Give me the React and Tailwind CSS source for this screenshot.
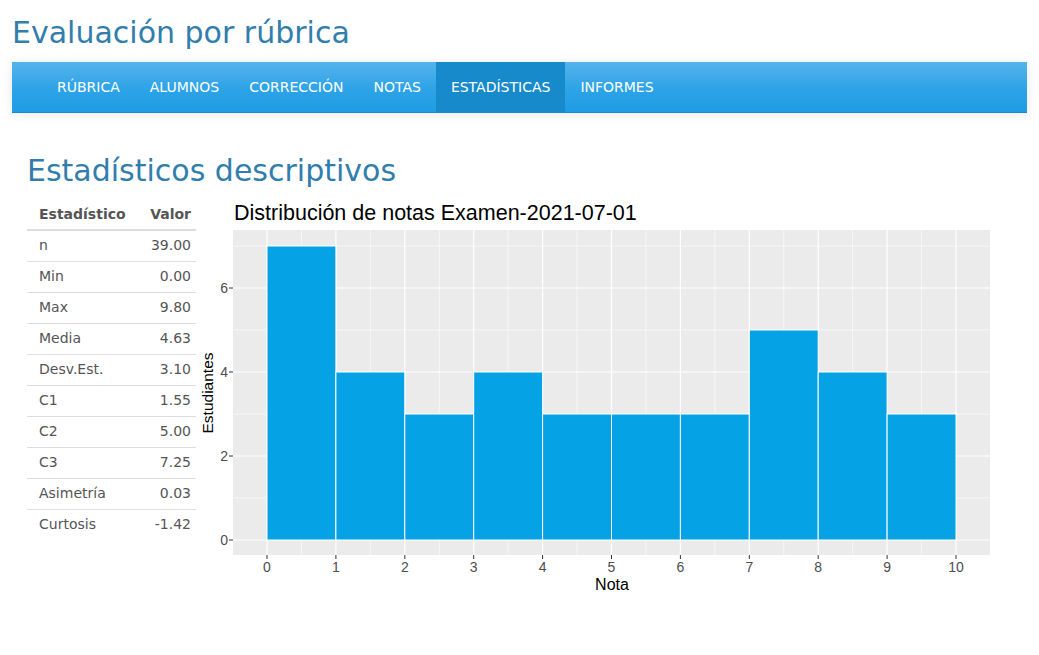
import React from "react"

const navItems = ["RÚBRICA", "ALUMNOS", "CORRECCIÓN", "NOTAS", "ESTADÍSTICAS", "INFORMES"]

const stats = [
  ["n", "39.00"],
  ["Min", "0.00"],
  ["Max", "9.80"],
  ["Media", "4.63"],
  ["Desv.Est.", "3.10"],
  ["C1", "1.55"],
  ["C2", "5.00"],
  ["C3", "7.25"],
  ["Asimetría", "0.03"],
  ["Curtosis", "-1.42"],
]

const counts = [7, 4, 3, 4, 3, 3, 3, 5, 4, 3]

// panel geometry in page coords (viewBox matches page offset)
const X0 = 267
const XU = 68.9
const Y0 = 540
const YU = 42
const PL = 233
const PR = 990
const PT = 230
const PB = 555
const px = (v) => X0 + v * XU
const py = (v) => Y0 - v * YU

const Histogram = () => {
  const minorX = [-0.5, 0.5, 1.5, 2.5, 3.5, 4.5, 5.5, 6.5, 7.5, 8.5, 9.5, 10.5]
  const majorX = [0, 1, 2, 3, 4, 5, 6, 7, 8, 9, 10]
  const minorY = [1, 3, 5, 7]
  const majorY = [0, 2, 4, 6]
  return (
    <svg width="810" height="410" viewBox="196 196 810 410" className="block shrink-0">
      <text x="234" y="220" fontSize="21.5" fill="#000" fontFamily="'Liberation Sans', Arial, sans-serif">
        Distribución de notas Examen-2021-07-01
      </text>
      <rect x={PL} y={PT} width={PR - PL} height={PB - PT} fill="#ebebeb" />
      {minorX.map((v) => (
        <line key={"mx" + v} x1={px(v)} x2={px(v)} y1={PT} y2={PB} stroke="#fff" strokeWidth="0.6" />
      ))}
      {minorY.map((v) => (
        <line key={"my" + v} x1={PL} x2={PR} y1={py(v)} y2={py(v)} stroke="#fff" strokeWidth="0.6" />
      ))}
      {majorX.map((v) => (
        <line key={"Mx" + v} x1={px(v)} x2={px(v)} y1={PT} y2={PB} stroke="#fff" strokeWidth="1.2" />
      ))}
      {majorY.map((v) => (
        <line key={"My" + v} x1={PL} x2={PR} y1={py(v)} y2={py(v)} stroke="#fff" strokeWidth="1.2" />
      ))}
      {counts.map((c, i) => (
        <rect
          key={i}
          x={px(i)}
          y={py(c)}
          width={XU}
          height={c * YU}
          fill="#05a2e6"
          stroke="#fff"
          strokeWidth="1"
        />
      ))}
      {majorY.map((v) => (
        <g key={"ty" + v}>
          <line x1={229} x2={233} y1={py(v)} y2={py(v)} stroke="#333" strokeWidth="1" />
          <text x="228" y={py(v) + 5} fontSize="14" fill="#4d4d4d" textAnchor="end" fontFamily="'Liberation Sans', Arial, sans-serif">
            {v}
          </text>
        </g>
      ))}
      {majorX.map((v) => (
        <g key={"tx" + v}>
          <line x1={px(v)} x2={px(v)} y1={PB} y2={PB + 4} stroke="#333" strokeWidth="1" />
          <text x={px(v)} y="571.5" fontSize="14" fill="#4d4d4d" textAnchor="middle" fontFamily="'Liberation Sans', Arial, sans-serif">
            {v}
          </text>
        </g>
      ))}
      <text x="612" y="590" fontSize="16" fill="#000" textAnchor="middle" fontFamily="'Liberation Sans', Arial, sans-serif">
        Nota
      </text>
      <text
        x="0"
        y="0"
        fontSize="15.5"
        fill="#000"
        textAnchor="middle"
        transform="translate(213 393) rotate(-90)"
        fontFamily="'Liberation Sans', Arial, sans-serif"
      >
        Estudiantes
      </text>
    </svg>
  )
}

const App = () => {
  return (
    <div className="min-h-[655px] bg-white px-[12px] text-[#555555] [font-family:'DejaVu_Sans',sans-serif]">
      <h2 className="pt-[16px] text-[30px] leading-[33px] text-[#317eac]">Evaluación por rúbrica</h2>

      <nav className="mt-[13px] flex h-[51px] items-stretch border-b border-[#178acc] bg-gradient-to-b from-[#54b4eb] via-[#2fa4e7] to-[#1d9ce5] pl-[30px] shadow-[0_1px_10px_rgba(0,0,0,0.1)]">
        {navItems.map((item) => (
          <div
            key={item}
            className={
              item === "ESTADÍSTICAS"
                ? "flex items-center bg-[#178acc] px-[15px] text-[14px] text-white"
                : "flex items-center px-[15px] text-[14px] text-white"
            }
          >
            {item}
          </div>
        ))}
      </nav>

      <div className="px-[15px]">
        <h2 className="mt-[41px] text-[30px] leading-[33px] text-[#317eac]">Estadísticos descriptivos</h2>

        <div className="mt-[9px] flex">
          <table className="mt-[4px] h-fit w-[169px] shrink-0 border-collapse text-[14px] text-[#555555]">
            <thead>
              <tr className="border-b-2 border-[#dddddd]">
                <th className="h-[30px] pl-[12px] text-left font-bold">Estadístico</th>
                <th className="h-[30px] pr-[5px] text-right font-bold">Valor</th>
              </tr>
            </thead>
            <tbody>
              {stats.map(([k, v], i) => (
                <tr key={k} className={i < stats.length - 1 ? "border-b border-[#dddddd]" : ""}>
                  <td className="h-[31px] pl-[12px] text-left">{k}</td>
                  <td className="h-[31px] pr-[5px] text-right">{v}</td>
                </tr>
              ))}
            </tbody>
          </table>
          <Histogram />
        </div>
      </div>
    </div>
  )
}

export default App
